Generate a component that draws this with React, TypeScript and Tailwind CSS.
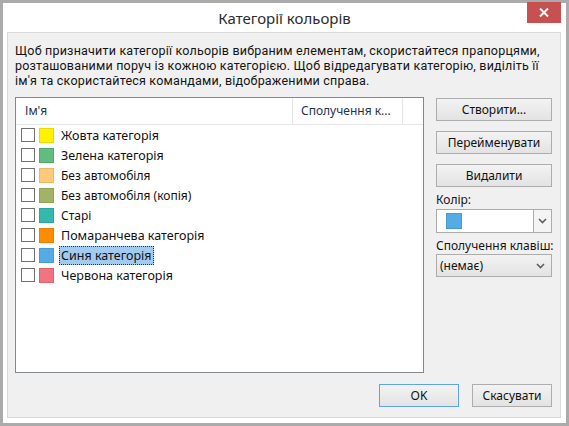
const categories = [
  { name: "Жовта категорія", swatch: "bg-[#fff100] border-[#e8d900]", big: true },
  { name: "Зелена категорія", swatch: "bg-[#5fbe7d] border-[#4faa6c]", big: true },
  { name: "Без автомобіля", swatch: "bg-[#fdca7c] border-[#eeb966]" },
  { name: "Без автомобіля (копія)", swatch: "bg-[#a3b366] border-[#92a257]" },
  { name: "Старі", swatch: "bg-[#33baad] border-[#2aa89b]" },
  { name: "Помаранчева категорія", swatch: "bg-[#ff8c00] border-[#ec7f00]", big: true },
  { name: "Синя категорія", swatch: "bg-[#55abe5] border-[#4a9bd3]", big: true, selected: true },
  { name: "Червона категорія", swatch: "bg-[#f1747f] border-[#e0626d]", big: true },
];

function Chevron() {
  return (
    <svg width="9" height="6" viewBox="0 0 9 6" className="text-[#5f5f5f]">
      <path d="M1 1 L4.5 4.5 L8 1" fill="none" stroke="currentColor" strokeWidth="1.6" />
    </svg>
  );
}

function Button({ label, primary }: { label: string; primary?: boolean }) {
  return (
    <button
      className={`block h-[23px] w-full border bg-linear-to-b from-[#f3f3f3] to-[#e3e3e3] text-[12px] leading-none text-[#111] ${
        primary ? "border-[#5ea5e8]" : "border-[#adadad]"
      }`}
    >
      {label}
    </button>
  );
}

export default function App() {
  return (
    <div className="w-[569px] h-[426px] border-[3px] border-[#ababab] bg-white flex flex-col font-['Noto_Sans',sans-serif]">
      {/* title bar */}
      <div className="relative h-[29px] shrink-0 flex items-center justify-center">
        <span className="text-[15px] text-[#2b2b2b] pt-[1px]">Категорії кольорів</span>
        <button className="absolute top-[-1px] right-[5px] w-[34px] h-[21px] bg-[#c75050] flex items-center justify-center">
          <svg width="10" height="9" viewBox="0 0 10 9">
            <path d="M1 0.5 L9 8.5 M9 0.5 L1 8.5" stroke="white" strokeWidth="2" />
          </svg>
        </button>
      </div>

      <div className="ml-[4px] mr-[5px] h-[386px] shrink-0 border border-[#d9d9d9] bg-[#f0f0f0] pl-[7px] pr-[8px] pt-[10px] flex flex-col">
        <div className="font-['Roboto',sans-serif] text-[12.5px] leading-[15px] tracking-[0.2px] text-[#141414] whitespace-nowrap">
          <div>Щоб призначити категорії кольорів вибраним елементам, скористайтеся прапорцями,</div>
          <div>розташованими поруч із кожною категорією. Щоб відредагувати категорію, виділіть її</div>
          <div>ім'я та скористайтеся командами, відображеними справа.</div>
        </div>

        <div className="mt-[9px] flex gap-[12px]">
          {/* list */}
          <div className="w-[410px] h-[276px] border border-[#828790] bg-white flex flex-col">
            <div className="h-[27px] shrink-0 flex border-b border-[#e5e5e5] text-[12px] text-[#1e3250]">
              <div className="w-[277px] border-r border-[#e5e5e5] pl-[9px] flex items-center">Ім'я</div>
              <div className="w-[110px] border-r border-[#e5e5e5] pl-[8px] flex items-center">Сполучення к...</div>
            </div>
            <div className="flex flex-col">
              {categories.map((c) => (
                <div key={c.name} className="h-[20px] flex items-center pl-[5px]">
                  <span className="w-[14px] h-[14px] border border-[#707070] bg-white shrink-0" />
                  <span className={`ml-[4px] w-[15px] h-[15px] border shrink-0 ${c.swatch}`} />
                  <span
                    className={`ml-[5px] px-[1px] border leading-[17px] text-[#111] ${
                      c.big ? "text-[12.5px]" : "text-[12px]"
                    } ${c.selected ? "bg-[#a3cbf0] border-dotted border-[#333]" : "border-transparent"}`}
                  >
                    {c.name}
                  </span>
                </div>
              ))}
            </div>
          </div>

          {/* commands */}
          <div className="w-[116px] pt-[1px] flex flex-col">
            <Button label="Створити..." />
            <div className="mt-[10px]">
              <Button label="Перейменувати" />
            </div>
            <div className="mt-[10px]">
              <Button label="Видалити" />
            </div>
            <div className="mt-[5px] text-[12px] leading-[16px] text-[#141414]">Колір:</div>
            <div className="mt-[1px] h-[24px] flex border border-[#acacac] bg-white">
              <div className="flex-1 flex items-center pl-[9px]">
                <span className="w-[16px] h-[16px] bg-[#55abe5] border border-[#4a9bd3]" />
              </div>
              <div className="w-[18px] border-l border-[#acacac] bg-[#f4f4f4] flex items-center justify-center">
                <Chevron />
              </div>
            </div>
            <div className="mt-[5px] text-[12px] leading-[16px] text-[#141414] whitespace-nowrap">Сполучення клавіш:</div>
            <div className="h-[23px] flex items-center justify-between border border-[#acacac] bg-linear-to-b from-[#f3f3f3] to-[#e3e3e3] pl-[3px] pr-[6px]">
              <span className="text-[12px] text-[#111]">(немає)</span>
              <Chevron />
            </div>
          </div>
        </div>

        <div className="mt-[11px] flex justify-end gap-[13px]">
          <div className="w-[80px]">
            <Button label="OK" primary />
          </div>
          <div className="w-[80px]">
            <Button label="Скасувати" />
          </div>
        </div>
      </div>
    </div>
  );
}
